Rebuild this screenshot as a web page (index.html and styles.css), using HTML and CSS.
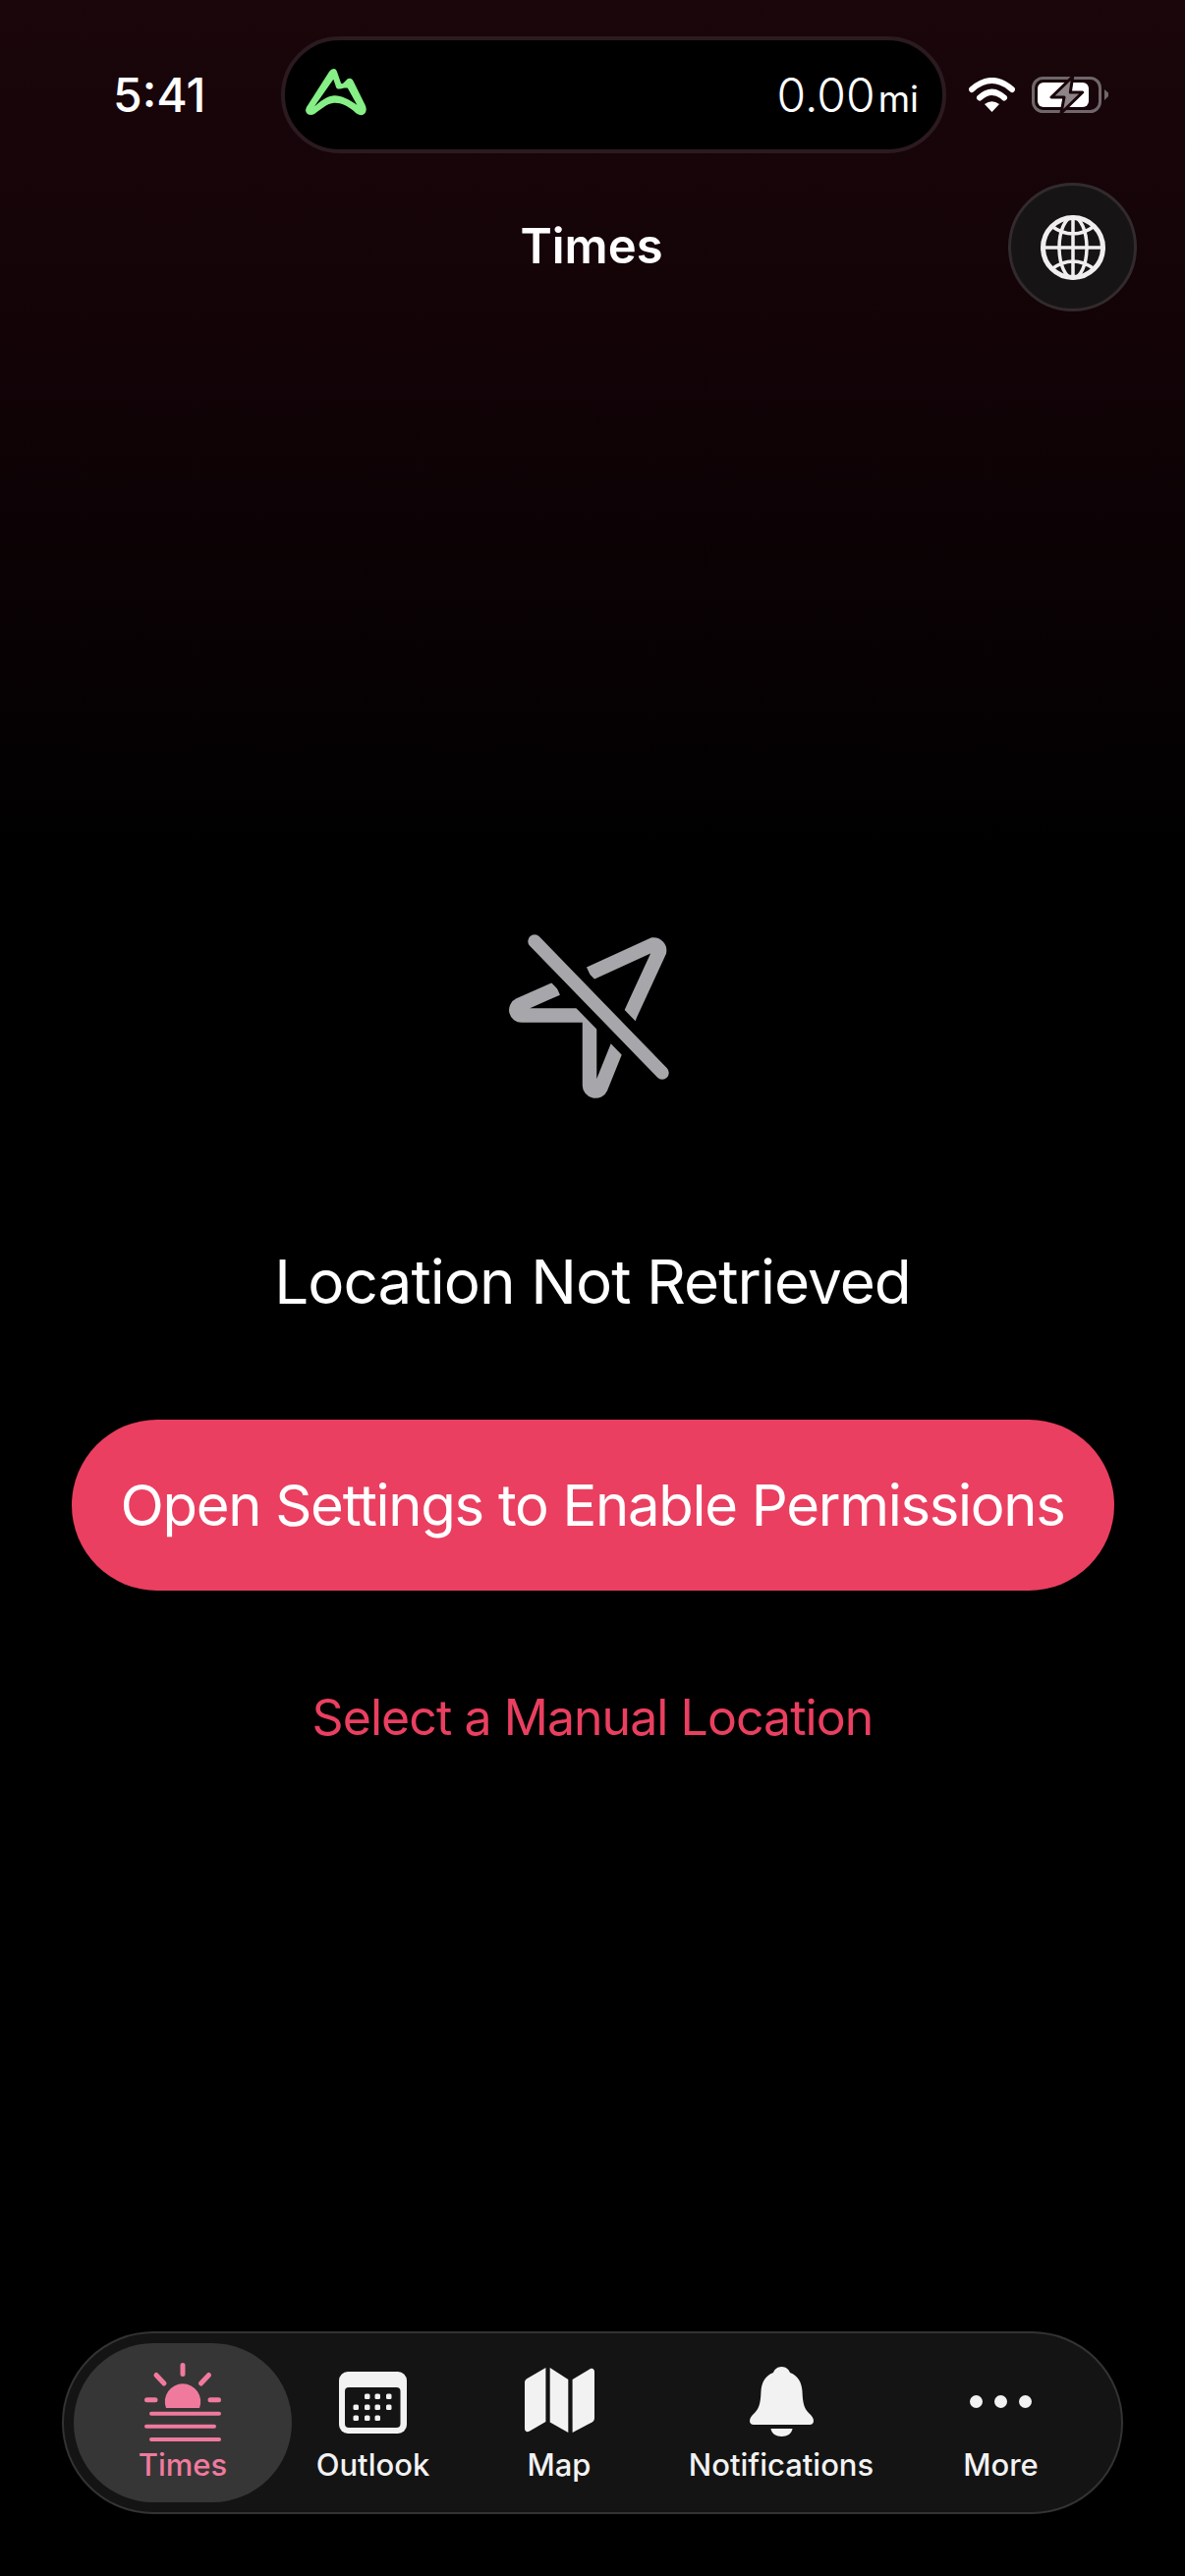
FILE: index.html
```html
<!DOCTYPE html>
<html lang="en">
<head>
<meta charset="utf-8">
<title>Times</title>
<link rel="stylesheet" href="styles.css">
</head>
<body>
<div class="page">
  <header class="status">
    <span class="clock">5:41</span>
    <div class="island">
      <svg class="peak" viewBox="0 0 63 48" aria-hidden="true"><path fill-rule="evenodd" fill="#86ef86" d="M29 0C30.500 0 31.500 1.500 32 3L36 14.500C36.500 15.500 37.500 15.500 38.500 14.500L42.500 10.500C44.500 9 47 10 48.300 12L60.700 37C62.500 41 62 45 58.500 46.800C55 48 52 46 49 43C43 38 36 34.500 29 34.800C22 35 15 42 9 46C6 47.500 2.500 47.300 1 45C-.5 43 0 41 1 39L24 3C25.500 1 27 0 29 0ZM28.300 10.700L9 38.300C15 33.500 21 27.800 29 27.300C36 27 44 31 52.300 36.700L43 20C42 19 38 20 35 20.500C32.500 21 31 20 30.500 17Z"/></svg>
      <span class="distance">0.00<small class="unit">mi</small></span>
    </div>
    <svg class="wifi" viewBox="0 0 47 35" aria-hidden="true"><path d="M3 12Q23.500-6 44 12" fill="none" stroke="#fff" stroke-width="6" stroke-linecap="round"/><path d="M11 20.500Q23.500 9 36 20.500" fill="none" stroke="#fff" stroke-width="6" stroke-linecap="round"/><path d="M16 27Q23.500 21.500 31 27L23.500 35Z" fill="#fff"/></svg>
    <svg class="battery" viewBox="0 0 78 37" aria-hidden="true"><rect x="1.500" y="1.500" width="68" height="34" rx="10" fill="none" stroke="#6f676a" stroke-width="3"/><rect x="6" y="6" width="52" height="25" rx="6" fill="#fff"/><path d="M74 13L78 16.500V20L74 24Z" fill="#6f676a"/><path d="M41.700 0L20 21H33L30 37L51.700 16H39.300Z" fill="#8c8487" stroke="#19050a" stroke-width="3" stroke-linejoin="round"/></svg>
  </header>

  <div class="titlebar">
    <h1 class="title">Times</h1>
    <button class="globe-btn" aria-label="Choose location">
      <svg class="globe" viewBox="0 0 66 66" aria-hidden="true"><g fill="none" stroke="#f0eeee"><circle cx="33" cy="33" r="30.500" stroke-width="5"/><ellipse cx="33" cy="33" rx="14" ry="31" stroke-width="3.500"/><path d="M33 2V64M2 33H64M11 11Q33 27 55 11M11 55Q33 39 55 55" stroke-width="3.500"/></g></svg>
    </button>
  </div>

  <main class="empty">
    <svg class="no-loc" viewBox="0 0 240 220" aria-hidden="true">
      <path fill="none" stroke="#a6a6ab" stroke-width="14.500" stroke-linecap="butt" d="M86 86L47.500 103A5.500 5.500 0 0 0 50 113.500H119V184.500A6 6 0 0 0 130.500 187L160.500 112.500L190 48.500A6 6 0 0 0 183.500 41.500L119 71"/>
      <path fill="none" stroke="#000" stroke-width="34" d="M50 25L206 185"/>
      <path fill="none" stroke="#a6a6ab" stroke-width="13.500" stroke-linecap="round" d="M63 38L193 172"/>
    </svg>
    <h2 class="message">Location Not Retrieved</h2>
    <button class="primary">Open Settings to Enable Permissions</button>
    <a class="manual" href="#">Select a Manual Location</a>
  </main>

  <nav class="tabbar">
    <a class="tab tab-active" href="#">
      <svg class="ico-sun" viewBox="0 0 78 80" aria-hidden="true"><g stroke="#f07a9e" stroke-linecap="round" fill="none"><path d="M39 2.500V11.500M12 12.500L20 21M65.500 12.500L57.500 21M2.500 37.700H11M67 37.700H75.500" stroke-width="5"/><path d="M7 51.700H76M2 64.700H71M7 78H76" stroke-width="4"/></g><path d="M22 46A18.200 18.200 0 1 1 56 46Z" fill="#f07a9e"/></svg>
      <span class="tab-label">Times</span>
    </a>
    <a class="tab" href="#">
      <svg class="ico-cal" viewBox="0 0 69 63" aria-hidden="true"><rect width="69" height="63" rx="9" fill="#f2f2f2"/><rect x="6" y="16" width="56.500" height="41" rx="4" fill="#141414"/><g fill="#f2f2f2"><rect x="26" y="22.500" width="5.500" height="5.500" rx="1.500"/><rect x="36.500" y="22.500" width="5.500" height="5.500" rx="1.500"/><rect x="48" y="22.500" width="5.500" height="5.500" rx="1.500"/><rect x="14.500" y="33.500" width="5.500" height="5.500" rx="1.500"/><rect x="26" y="33.500" width="5.500" height="5.500" rx="1.500"/><rect x="36.500" y="33.500" width="5.500" height="5.500" rx="1.500"/><rect x="48" y="33.500" width="5.500" height="5.500" rx="1.500"/><rect x="14.500" y="44.500" width="5.500" height="5.500" rx="1.500"/><rect x="26" y="44.500" width="5.500" height="5.500" rx="1.500"/><rect x="36.500" y="44.500" width="5.500" height="5.500" rx="1.500"/></g></svg>
      <span class="tab-label">Outlook</span>
    </a>
    <a class="tab" href="#">
      <svg class="ico-map" viewBox="0 0 71 66" aria-hidden="true"><g fill="#f2f2f2"><path d="M0 15C0 13 1 12 2.500 11L21.400 0V55L5 64.500C2.500 66 0 65 0 62Z"/><path d="M25.700 0L44.300 12V66L25.700 55.500Z"/><path d="M48.600 12L66.500 1.200C69 0 71 1.500 71 4V51C71 53 70 54.500 68.500 55.500L48.600 66Z"/></g></svg>
      <span class="tab-label">Map</span>
    </a>
    <a class="tab" href="#">
      <svg class="ico-bell" viewBox="0 0 65 71" aria-hidden="true"><path fill="#f2f2f2" d="M32.500 0C37 0 40 3 41 6C49 9 53 16 53.500 25C54 36 55 42 60 47C63 50 65 52 65 55C65 57.500 63.500 59 61 59H4C1.500 59 0 57.500 0 55C0 52 2 50 5 47C10 42 11 36 11.500 25C12 16 16 9 24 6C25 3 28 0 32.500 0ZM21.500 63H43.500C43 68 38 71 32.500 71C27 71 22 68 21.500 63Z"/></svg>
      <span class="tab-label">Notifications</span>
    </a>
    <a class="tab" href="#">
      <span class="ico-more"><i class="dot"></i><i class="dot"></i><i class="dot"></i></span>
      <span class="tab-label">More</span>
    </a>
  </nav>
</div>
</body>
</html>
```

FILE: styles.css
```css
* { box-sizing: border-box; }
html, body { margin: 0; padding: 0; background: #000; }
body { font-family: Inter, "Liberation Sans", sans-serif; color: #fff; }
.page {
  width: 1206px;
  height: 2622px;
  display: flex;
  flex-direction: column;
  background: linear-gradient(180deg, #1a060b 0, #130307 330px, #000 880px);
  overflow: hidden;
}
.status {
  display: flex;
  align-items: center;
  height: 119px;
  margin-top: 37px;
  padding-left: 115px;
}
.clock { width: 171px; font-size: 48px; font-weight: 500; letter-spacing: 0; line-height: 1; }
.island {
  width: 677px;
  height: 119px;
  display: flex;
  align-items: center;
  justify-content: space-between;
  padding: 0 24px 0 21px;
  background: #000;
  border: 4px solid #2b1a1f;
  border-radius: 60px;
}
.peak { width: 63px; height: 48px; margin-top: -6px; }
.distance { font-size: 48px; font-weight: 350; line-height: 1; }
.unit { font-size: 37px; font-weight: 400; margin-left: 3px; }
.wifi { width: 47px; height: 35px; margin-left: 23px; margin-top: 0; }
.battery { width: 78px; height: 37px; margin-left: 17px; }
.titlebar {
  display: grid;
  grid-template-columns: 1fr auto 1fr;
  align-items: center;
  margin-top: 30px;
  height: 131px;
  padding-right: 49px;
  padding-left: 47px;
}
.title { grid-column: 2; margin: 0 0 3px; font-size: 49px; font-weight: 600; line-height: 1; }
.globe-btn {
  grid-column: 3;
  justify-self: end;
  width: 131px;
  height: 131px;
  padding: 0;
  display: flex;
  align-items: center;
  justify-content: center;
  background: #171415;
  border: 3px solid #322b2d;
  border-radius: 50%;
}
.globe { width: 66px; height: 66px; }
.empty {
  flex: 1;
  display: flex;
  flex-direction: column;
  align-items: center;
  padding-top: 603px;
}
.no-loc { width: 240px; height: 220px; flex: none; margin-left: -5px; }
.message { margin: 130px 0 0; font-size: 62px; font-weight: 400; letter-spacing: -0.95px; line-height: 70px; }
.primary {
  width: 1061px;
  height: 174px;
  margin-top: 105px;
  background: #ea3f60;
  color: #fff;
  border: 0;
  border-radius: 87px;
  font: 400 58px/1 Inter, "Liberation Sans", sans-serif;
  letter-spacing: -1.3px;
}
.manual { margin-top: 96px; color: #ea3f60; font-size: 50px; letter-spacing: -0.95px; line-height: 66px; text-decoration: none; }
.tabbar {
  flex: none;
  display: grid;
  grid-template-columns: 222px 165px 214px 238px 209px;
  width: 1080px;
  height: 186px;
  margin: 0 0 63px 63px;
  padding: 10px 0 10px 10px;
  background: #141414;
  border: 2px solid #333;
  border-radius: 93px;
}
.tab { display: flex; flex-direction: column; align-items: center; justify-content: flex-end; height: 162px; padding-bottom: 19px; color: #f2f2f2; text-decoration: none; border-radius: 81px; }
.tab-active { background: #363636; color: #f07a9e; }
.tab-label { font-size: 31px; font-weight: 500; line-height: 38px; letter-spacing: 0; white-space: nowrap; }
.ico-sun { width: 78px; height: 80px; margin-bottom: 5px; }
.ico-cal { width: 69px; height: 63px; margin-bottom: 13px; }
.ico-map { width: 71px; height: 66px; margin-bottom: 14px; }
.ico-bell { width: 65px; height: 71px; margin-bottom: 10px; }
.ico-more { display: flex; gap: 12px; height: 13px; margin-bottom: 39px; }
.dot { display: block; width: 13px; height: 13px; border-radius: 50%; background: #f2f2f2; }
```
